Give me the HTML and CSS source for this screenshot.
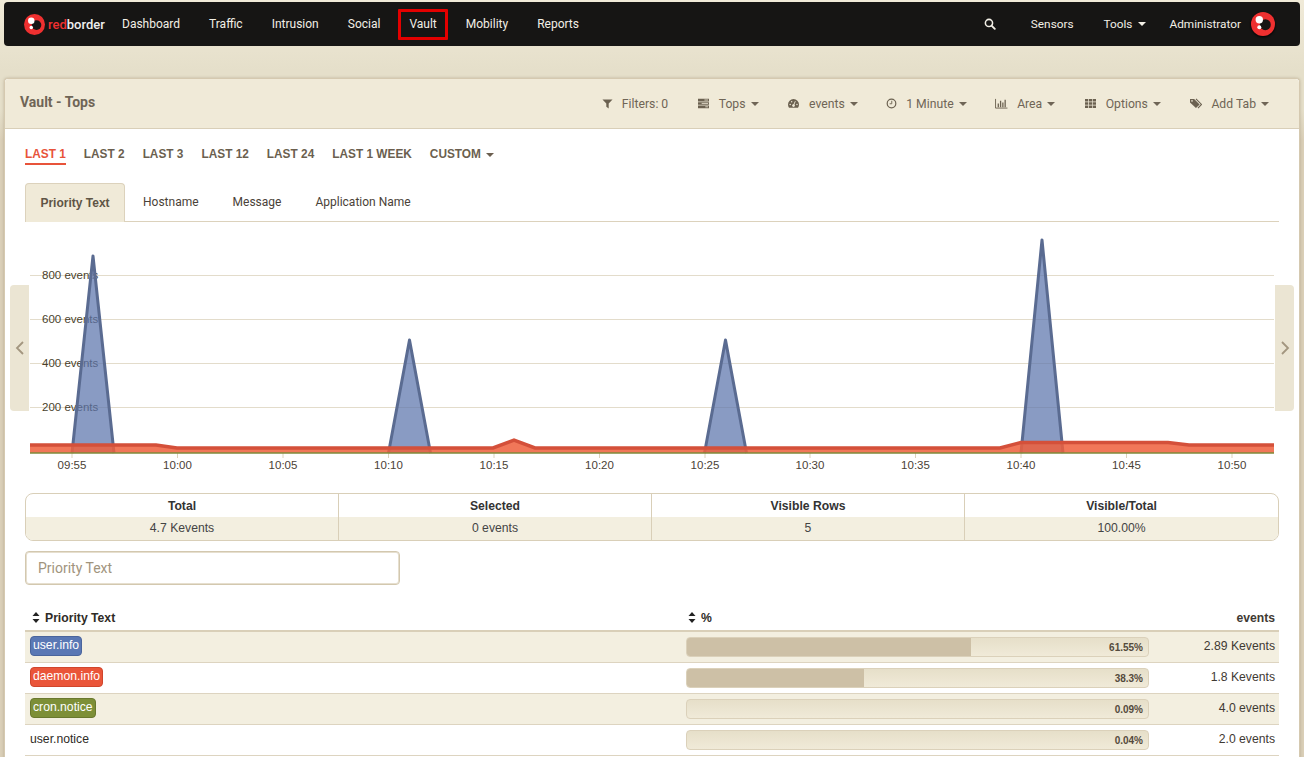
FILE: index.html
```html
<!DOCTYPE html>
<html lang="en">
<head>
<meta charset="utf-8">
<title>Vault - Tops</title>
<link rel="stylesheet" href="styles.css">
</head>
<body>
<nav class="navbar">
  <a class="brand">
    <svg class="logo" viewBox="0 0 24 24"><circle cx="12" cy="12" r="12" fill="#ef3030"/><circle cx="14.3" cy="12.7" r="5.5" fill="#161514"/><circle cx="8.3" cy="7.7" r="3.7" fill="#fff"/><circle cx="8.3" cy="15.3" r="2" fill="#fff"/></svg>
    <span class="brand-text"><span class="brand-red">red</span>border</span>
  </a>
  <ul class="nav-left">
    <li>Dashboard</li><li>Traffic</li><li>Intrusion</li><li>Social</li><li class="nav-current">Vault</li><li>Mobility</li><li>Reports</li>
  </ul>
  <ul class="nav-right">
    <li><svg class="ico-search" viewBox="0 0 14 14"><circle cx="5.8" cy="5.8" r="4.2" fill="none" stroke="#f2efe6" stroke-width="1.8"/><path d="M8.8 8.8l3.8 3.8" stroke="#f2efe6" stroke-width="2.2" stroke-linecap="round"/></svg></li>
    <li>Sensors</li>
    <li>Tools <i class="caret"></i></li>
    <li class="nav-user">Administrator
      <svg class="avatar" viewBox="0 0 24 24"><circle cx="12" cy="12" r="12" fill="#ef3030"/><circle cx="14.3" cy="12.7" r="5.5" fill="#161514"/><circle cx="8.3" cy="7.7" r="3.7" fill="#fff"/><circle cx="8.3" cy="15.3" r="2" fill="#fff"/></svg>
    </li>
  </ul>
</nav>

<main class="panel">
  <header class="panel-head">
    <h1>Vault - Tops</h1>
    <ul class="tools">
      <li><svg class="ico" viewBox="0 0 12 12"><path d="M.5 1.500h11L7.300 6v5.500L4.700 9.500V6z" fill="#6b6150"/></svg>Filters: 0</li>
      <li><svg class="ico ico-w" viewBox="0 0 14 12"><path d="M1 .8h12v2.900H1zM1 4.500h12v2.900H1zM1 8.200h12v2.900H1z" fill="#6b6150"/><path d="M8 2.200h4M5 5.900h7M9 9.600h3" stroke="#f0ead8" stroke-width=".9"/></svg>Tops <i class="caret"></i></li>
      <li><svg class="ico ico-w" viewBox="0 0 14 12"><path d="M7 1.200a6 6 0 0 0-6 6c0 1.300.4 2.500 1.100 3.500h9.800A6 6 0 0 0 13 7.200a6 6 0 0 0-6-6z" fill="#6b6150"/><circle cx="7" cy="8.300" r="1.500" fill="#f0ead8"/><path d="M7 8l2-4.500" stroke="#f0ead8" stroke-width="1"/><circle cx="3.400" cy="7" r=".8" fill="#f0ead8"/><circle cx="5" cy="4.200" r=".8" fill="#f0ead8"/><circle cx="10.800" cy="7" r=".8" fill="#f0ead8"/></svg>events <i class="caret"></i></li>
      <li><svg class="ico" viewBox="0 0 12 12"><circle cx="6" cy="6" r="4.700" fill="none" stroke="#6b6150" stroke-width="1.300"/><path d="M6.300 3v3.300H4" fill="none" stroke="#6b6150"/></svg>1 Minute <i class="caret"></i></li>
      <li><svg class="ico ico-w" viewBox="0 0 14 12"><path d="M.5 1v10h13" fill="none" stroke="#6b6150"/><path d="M2.800 6h1.400v4H2.800zM5.300 3h1.400v7H5.300zM7.800 5h1.400v5H7.800zM10.300 2h1.400v8h-1.400z" fill="#6b6150"/></svg>Area <i class="caret"></i></li>
      <li><svg class="ico ico-w" viewBox="0 0 14 12"><path d="M1 1h3.500v2.800H1zM5.300 1h3.500v2.800H5.300zM9.500 1H13v2.800H9.500zM1 4.600h3.500v2.800H1zM5.300 4.600h3.500v2.800H5.300zM9.500 4.600H13v2.800H9.500zM1 8.200h3.500V11H1zM5.300 8.200h3.500V11H5.300zM9.500 8.200H13V11H9.500z" fill="#6b6150"/></svg>Options <i class="caret"></i></li>
      <li><svg class="ico ico-w" viewBox="0 0 14 12"><path d="M1 1h4.500l6 6-4 4-6.500-6z" fill="#6b6150"/><path d="M7.500 1l6 6-3.800 4" fill="none" stroke="#6b6150" stroke-width="1.200"/><circle cx="3.200" cy="3.200" r=".9" fill="#f0ead8"/></svg>Add Tab <i class="caret"></i></li>
    </ul>
  </header>

  <section class="panel-body">
    <ul class="ranges">
      <li class="range-on">LAST 1</li><li>LAST 2</li><li>LAST 3</li><li>LAST 12</li><li>LAST 24</li><li>LAST 1 WEEK</li><li>CUSTOM <i class="caret caret-dark"></i></li>
    </ul>
    <ul class="tabs">
      <li class="tab-on">Priority Text</li><li>Hostname</li><li>Message</li><li>Application Name</li>
    </ul>

    <div class="chart-wrap">
      <svg class="chart" viewBox="0 0 1304 255" aria-label="Events chart">
        <path class="grid" d="M30 53.500H1274M30 97.500H1274M30 141.500H1274M30 185.500H1274"/>
        <path class="ticks" d="M72 231v5M177.500 231v5M283 231v5M388.500 231v5M494 231v5M599.500 231v5M705 231v5M810 231v5M915.500 231v5M1021 231v5M1126.500 231v5M1232 231v5"/>
        <g class="ylabels">
          <text x="42" y="57">800 events</text>
          <text x="42" y="101">600 events</text>
          <text x="42" y="145">400 events</text>
          <text x="42" y="189">200 events</text>
        </g>
        <g class="blue-fill">
          <path d="M72 231L93 34L114 231z"/>
          <path d="M388.500 231L409.500 118L430.500 231z"/>
          <path d="M704.500 231L725.500 118L746.500 231z"/>
          <path d="M1021 231L1042 18L1063 231z"/>
        </g>
        <g class="blue-line">
          <path d="M72 231L93 34L114 231"/>
          <path d="M388.500 231L409.500 118L430.500 231"/>
          <path d="M704.500 231L725.500 118L746.500 231"/>
          <path d="M1021 231L1042 18L1063 231"/>
        </g>
        <path class="red-area" d="M30 223H156L177 226H493L514 218L535 226H1000L1021 220.500H1168L1189 223H1274V231H30z"/>
        <path class="red-line" d="M30 223H156L177 226H493L514 218L535 226H1000L1021 220.500H1168L1189 223H1274"/>
        <path class="green" d="M30 231H1274"/>
        <g class="xlabels">
          <text x="72" y="247">09:55</text><text x="177.500" y="247">10:00</text><text x="283" y="247">10:05</text><text x="388.500" y="247">10:10</text><text x="494" y="247">10:15</text><text x="599.500" y="247">10:20</text><text x="705" y="247">10:25</text><text x="810" y="247">10:30</text><text x="915.500" y="247">10:35</text><text x="1021" y="247">10:40</text><text x="1126.500" y="247">10:45</text><text x="1232" y="247">10:50</text>
        </g>
      </svg>
      <div class="slide slide-l"><svg viewBox="0 0 10 16"><path d="M8 2L2 8l6 6" fill="none" stroke="#a3967f" stroke-width="1.800"/></svg></div>
      <div class="slide slide-r"><svg viewBox="0 0 10 16"><path d="M2 2l6 6-6 6" fill="none" stroke="#a3967f" stroke-width="1.800"/></svg></div>
    </div>

    <div class="stats">
      <div class="stat"><b>Total</b><span>4.7 Kevents</span></div>
      <div class="stat"><b>Selected</b><span>0 events</span></div>
      <div class="stat"><b>Visible Rows</b><span>5</span></div>
      <div class="stat"><b>Visible/Total</b><span>100.00%</span></div>
    </div>

    <input class="search" type="text" placeholder="Priority Text">

    <div class="table">
      <div class="row row-head">
        <div class="cell-name"><svg class="sort" viewBox="0 0 8 11"><path d="M4 0l3.500 4h-7zM4 11L.5 7h7z" fill="#222"/></svg>Priority Text</div>
        <div class="cell-pct"><svg class="sort" viewBox="0 0 8 11"><path d="M4 0l3.500 4h-7zM4 11L.5 7h7z" fill="#222"/></svg>%</div>
        <div class="cell-val">events</div>
      </div>
      <div class="row row-odd">
        <div class="cell-name"><span class="label label-blue">user.info</span></div>
        <div class="cell-pct"><div class="bar"><div class="fill" style="width:61.55%"></div><em>61.55%</em></div></div>
        <div class="cell-val">2.89 Kevents</div>
      </div>
      <div class="row">
        <div class="cell-name"><span class="label label-red">daemon.info</span></div>
        <div class="cell-pct"><div class="bar"><div class="fill" style="width:38.3%"></div><em>38.3%</em></div></div>
        <div class="cell-val">1.8 Kevents</div>
      </div>
      <div class="row row-odd">
        <div class="cell-name"><span class="label label-green">cron.notice</span></div>
        <div class="cell-pct"><div class="bar"><em>0.09%</em></div></div>
        <div class="cell-val">4.0 events</div>
      </div>
      <div class="row">
        <div class="cell-name">user.notice</div>
        <div class="cell-pct"><div class="bar"><em>0.04%</em></div></div>
        <div class="cell-val">2.0 events</div>
      </div>
    </div>
  </section>
</main>
</body>
</html>
```
FILE: styles.css
```css
* { box-sizing: border-box; }
html, body { height: 757px; overflow: hidden; }
body {
  margin: 0;
  padding: 2px 4px 0;
  background: linear-gradient(#f0ead8 0, #e5dfca 70px, #e5dfca 110px, #dacfb8 140px);
  font-family: "Liberation Sans", Arial, sans-serif;
  font-size: 12.2px;
  color: #333;
}
ul { list-style: none; margin: 0; padding: 0; display: flex; }

.navbar {
  height: 44px;
  background: #161514;
  border-radius: 4px;
  display: flex;
  align-items: center;
  padding-left: 20px;
  color: #f2efe6;
  font-family: Roboto, "Liberation Sans", sans-serif;
  font-size: 12px;
}
.brand { display: flex; align-items: center; gap: 3px; width: 87px; flex: none; white-space: nowrap; }
.logo { width: 21px; height: 21px; flex: none; }
.brand-text { font-size: 13px; font-weight: 500; color: #eee; }
.brand-red { color: #ef3030; }
.nav-left { align-items: center; gap: 7px; }
.nav-left li { padding: 5px 8px 6px; border: 3px solid transparent; margin-top: 1px; }
.nav-left .nav-current { border-color: #e30000; border-radius: 1px; }
.nav-right { margin-left: auto; align-items: center; margin-top: -1px; font-size: 11.8px; }
.nav-right li { display: flex; align-items: center; gap: 4px; }
.ico-search { width: 12px; height: 12px; margin-right: 35px; }
.nav-right li:nth-child(2) { margin-right: 30px; }
.nav-right li:nth-child(3) { margin-right: 23px; }
.nav-right .nav-user { margin-right: 25px; gap: 10px; }
.avatar { width: 24px; height: 24px; margin-top: 1px; filter: drop-shadow(0 1px 1px #000); }
.caret {
  display: inline-block;
  width: 0; height: 0;
  margin-left: 2px;
  vertical-align: middle;
  border-left: 4px solid transparent;
  border-right: 4px solid transparent;
  border-top: 4px solid currentColor;
}

.panel {
  margin-top: 32px;
  height: 690px;
  background: #fff;
  border: 1px solid #d5c9b0;
  border-bottom: 0;
  border-radius: 4px 4px 0 0;
  box-shadow: 0 0 3px rgba(120, 100, 70, .35);
}
.panel-head {
  height: 50px;
  background: #f0ead8;
  border-bottom: 1px solid #d9cfb8;
  display: flex;
  align-items: center;
  justify-content: space-between;
  padding: 0 30px 0 15px;
  border-radius: 4px 4px 0 0;
}
.panel-head h1 {
  margin: 0 0 3px;
  font-family: Roboto, "Liberation Sans", sans-serif;
  font-size: 14px;
  font-weight: 700;
  color: #6f6556;
}
.tools { gap: 28.5px; color: #6f6556; font-family: Roboto, "Liberation Sans", sans-serif; font-size: 12.2px; }
.tools li { display: flex; align-items: center; white-space: pre; }
.tools .caret { margin-left: 2px; }
.ico { width: 11px; height: 11px; margin-right: 9px; }
.ico-w { width: 13px; margin-right: 9px; }

.panel-body { padding: 0 20px; }
.ranges {
  padding-top: 17px;
  gap: 18px;
  font-size: 11.85px;
  font-weight: 700;
  color: #6b5f4f;
  height: 54px;
}
.ranges li { height: 19px; line-height: 16px; }
.range-on { color: #e8533a; border-bottom: 2px solid #e8533a; }
.caret-dark { margin-left: 2px; }

.tabs {
  height: 39px;
  border-bottom: 1px solid #dcd2bc;
  font-family: Roboto, "Liberation Sans", sans-serif;
  font-size: 12px;
  color: #4a4238;
  align-items: flex-end;
}
.tabs li { padding: 0 17px; line-height: 38px; height: 38px; }
.tabs .tab-on {
  width: 100px;
  height: 39px;
  padding: 0;
  margin-bottom: -1px;
  margin-right: 1px;
  text-align: center;
  line-height: 38px;
  background: #f0ead8;
  border: 1px solid #dcd2bc;
  border-bottom: 0;
  border-radius: 4px 4px 0 0;
  font-family: "Liberation Sans", sans-serif;
  font-size: 12px;
  font-weight: 700;
  color: #5f5546;
}

.chart-wrap { position: relative; height: 271px; margin-left: -25px; width: 1304px; }
.chart { display: block; width: 1304px; height: 255px; }
.grid { stroke: #e3dccb; stroke-width: 1; fill: none; }
.ticks { stroke: #dbd2bd; stroke-width: 1; fill: none; }
.ylabels text { font: 11.5px "Liberation Sans", sans-serif; fill: #4a3f2c; }
.xlabels text { font: 11.5px "Liberation Sans", sans-serif; fill: #4a4236; text-anchor: middle; }
.blue-fill path { fill: rgba(91, 117, 172, .72); }
.blue-line path { fill: none; stroke: #5a6b91; stroke-width: 3; stroke-linejoin: round; }
.green { stroke: #7f8a3a; stroke-width: 1.5; fill: none; }
.red-area { fill: rgba(238, 95, 60, .85); }
.red-line { stroke: #d4503a; stroke-width: 3.5; fill: none; }
.slide {
  position: absolute;
  top: 63px;
  width: 19px;
  height: 126px;
  background: #ebe5d3;
  display: flex;
  align-items: center;
  justify-content: center;
}
.slide svg { width: 10px; height: 16px; }
.slide-l { left: 10px; border-radius: 4px 0 0 4px; }
.slide-r { left: 1275px; border-radius: 0 4px 4px 0; }

.stats {
  height: 48px;
  display: grid;
  grid-template-columns: repeat(4, 1fr);
  border: 1px solid #d9cfb8;
  border-radius: 8px;
  overflow: hidden;
}
.stat { display: flex; flex-direction: column; text-align: center; border-right: 1px solid #d9cfb8; }
.stat:last-child { border-right: 0; }
.stat b { height: 23px; line-height: 25px; color: #333; }
.stat span { flex: 1; line-height: 23px; background: #f3efe0; color: #444; }

.search {
  display: block;
  margin-top: 10px;
  width: 375px;
  height: 34px;
  border: 1px solid #d3c8af;
  box-shadow: inset 0 0 0 1px #e6dfcf;
  border-radius: 4px;
  padding: 0 12px;
  font-family: Roboto, "Liberation Sans", sans-serif;
  font-size: 14px;
  outline: 0;
  background: #fff;
}
.search::placeholder { color: #a1947d; opacity: 1; }

.table { margin-top: 22px; }
.row {
  display: grid;
  grid-template-columns: 656px 468px 130px;
  align-items: center;
  height: 31px;
  border-bottom: 1px solid #ddd4c0;
}
.row > div { padding-left: 5px; }
.row-head {
  height: 25px;
  border-bottom: 2px solid #d9cfb8;
  font-weight: 700;
  color: #2d2a26;
  padding-bottom: 1px;
}
.row-odd { background: #f3efe0; }
.sort { width: 8px; height: 11px; margin: 0 5px 0 2px; vertical-align: -1px; }
.cell-name { color: #2f2b26; padding-bottom: 2px; }
.cell-pct { padding-left: 5px; }
.cell-val { text-align: right; padding-right: 4px; padding-bottom: 2px; color: #3f3a33; }
.row-head .cell-name, .row-head .cell-val { padding-bottom: 0; }
.bar {
  position: relative;
  width: 463px;
  height: 20px;
  border-radius: 4px;
  border: 1px solid #dbd1ba;
  background: linear-gradient(#e6dfc9, #f0ead8);
  overflow: hidden;
}
.fill { position: absolute; left: 0; top: 0; bottom: 0; background: #cdc0a6; }
.bar em {
  position: absolute;
  right: 5px;
  top: 0;
  line-height: 19px;
  font-style: normal;
  font-size: 10px;
  font-weight: 700;
  color: #544a3c;
}
.label {
  display: inline-block;
  padding: 0 2px;
  height: 20px;
  line-height: 17px;
  border-radius: 4px;
  border: 1px solid;
  color: #fff;
}
.label-blue { background: #5a78b4; border-color: #4a659c; }
.label-red { background: #ea5539; border-color: #d0452c; }
.label-green { background: #7d8f37; border-color: #69782d; }
```
